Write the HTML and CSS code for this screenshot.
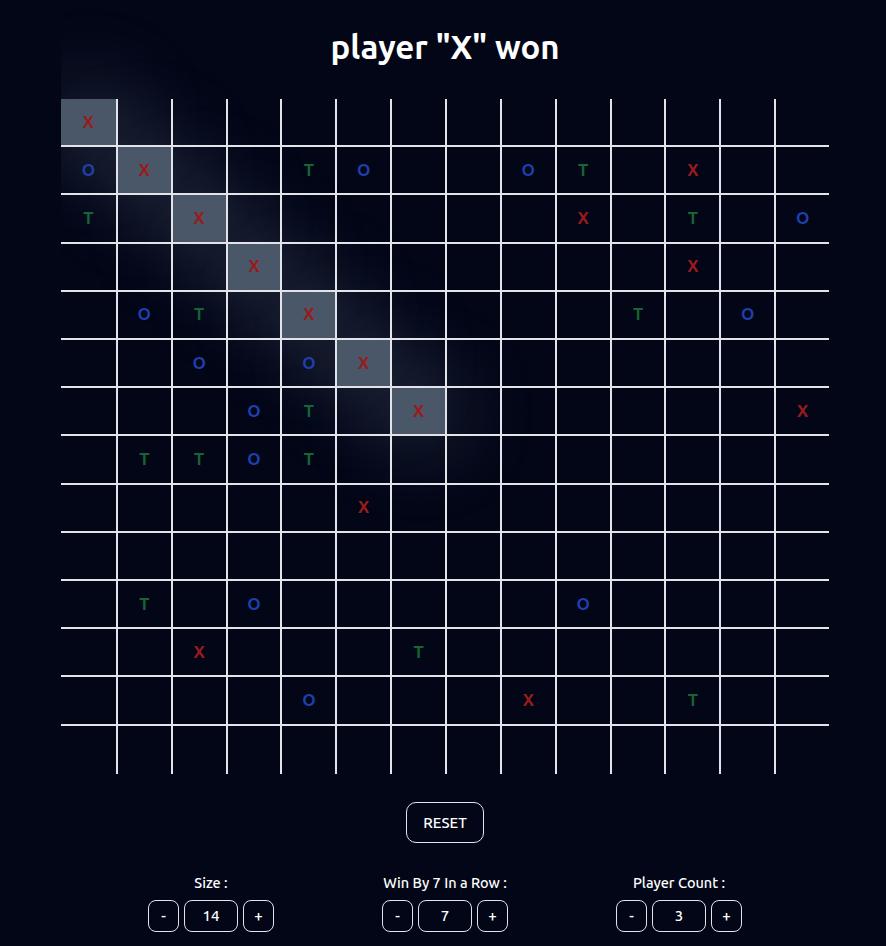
FILE: index.html
```html
<!DOCTYPE html>
<html lang="en">
<head>
<meta charset="utf-8">
<title>Tic Tac Toe</title>
<link rel="stylesheet" href="styles.css">
</head>
<body>
<main class="app">
  <h1 class="title">player "X" won</h1>
  <div class="board">
    <div class="cell win x">X</div><div class="cell"></div><div class="cell"></div><div class="cell"></div><div class="cell"></div><div class="cell"></div><div class="cell"></div><div class="cell"></div><div class="cell"></div><div class="cell"></div><div class="cell"></div><div class="cell"></div><div class="cell"></div><div class="cell"></div>
    <div class="cell o">O</div><div class="cell win x">X</div><div class="cell"></div><div class="cell"></div><div class="cell t">T</div><div class="cell o">O</div><div class="cell"></div><div class="cell"></div><div class="cell o">O</div><div class="cell t">T</div><div class="cell"></div><div class="cell x">X</div><div class="cell"></div><div class="cell"></div>
    <div class="cell t">T</div><div class="cell"></div><div class="cell win x">X</div><div class="cell"></div><div class="cell"></div><div class="cell"></div><div class="cell"></div><div class="cell"></div><div class="cell"></div><div class="cell x">X</div><div class="cell"></div><div class="cell t">T</div><div class="cell"></div><div class="cell o">O</div>
    <div class="cell"></div><div class="cell"></div><div class="cell"></div><div class="cell win x">X</div><div class="cell"></div><div class="cell"></div><div class="cell"></div><div class="cell"></div><div class="cell"></div><div class="cell"></div><div class="cell"></div><div class="cell x">X</div><div class="cell"></div><div class="cell"></div>
    <div class="cell"></div><div class="cell o">O</div><div class="cell t">T</div><div class="cell"></div><div class="cell win x">X</div><div class="cell"></div><div class="cell"></div><div class="cell"></div><div class="cell"></div><div class="cell"></div><div class="cell t">T</div><div class="cell"></div><div class="cell o">O</div><div class="cell"></div>
    <div class="cell"></div><div class="cell"></div><div class="cell o">O</div><div class="cell"></div><div class="cell o">O</div><div class="cell win x">X</div><div class="cell"></div><div class="cell"></div><div class="cell"></div><div class="cell"></div><div class="cell"></div><div class="cell"></div><div class="cell"></div><div class="cell"></div>
    <div class="cell"></div><div class="cell"></div><div class="cell"></div><div class="cell o">O</div><div class="cell t">T</div><div class="cell"></div><div class="cell win x">X</div><div class="cell"></div><div class="cell"></div><div class="cell"></div><div class="cell"></div><div class="cell"></div><div class="cell"></div><div class="cell x">X</div>
    <div class="cell"></div><div class="cell t">T</div><div class="cell t">T</div><div class="cell o">O</div><div class="cell t">T</div><div class="cell"></div><div class="cell"></div><div class="cell"></div><div class="cell"></div><div class="cell"></div><div class="cell"></div><div class="cell"></div><div class="cell"></div><div class="cell"></div>
    <div class="cell"></div><div class="cell"></div><div class="cell"></div><div class="cell"></div><div class="cell"></div><div class="cell x">X</div><div class="cell"></div><div class="cell"></div><div class="cell"></div><div class="cell"></div><div class="cell"></div><div class="cell"></div><div class="cell"></div><div class="cell"></div>
    <div class="cell"></div><div class="cell"></div><div class="cell"></div><div class="cell"></div><div class="cell"></div><div class="cell"></div><div class="cell"></div><div class="cell"></div><div class="cell"></div><div class="cell"></div><div class="cell"></div><div class="cell"></div><div class="cell"></div><div class="cell"></div>
    <div class="cell"></div><div class="cell t">T</div><div class="cell"></div><div class="cell o">O</div><div class="cell"></div><div class="cell"></div><div class="cell"></div><div class="cell"></div><div class="cell"></div><div class="cell o">O</div><div class="cell"></div><div class="cell"></div><div class="cell"></div><div class="cell"></div>
    <div class="cell"></div><div class="cell"></div><div class="cell x">X</div><div class="cell"></div><div class="cell"></div><div class="cell"></div><div class="cell t">T</div><div class="cell"></div><div class="cell"></div><div class="cell"></div><div class="cell"></div><div class="cell"></div><div class="cell"></div><div class="cell"></div>
    <div class="cell"></div><div class="cell"></div><div class="cell"></div><div class="cell"></div><div class="cell o">O</div><div class="cell"></div><div class="cell"></div><div class="cell"></div><div class="cell x">X</div><div class="cell"></div><div class="cell"></div><div class="cell t">T</div><div class="cell"></div><div class="cell"></div>
    <div class="cell"></div><div class="cell"></div><div class="cell"></div><div class="cell"></div><div class="cell"></div><div class="cell"></div><div class="cell"></div><div class="cell"></div><div class="cell"></div><div class="cell"></div><div class="cell"></div><div class="cell"></div><div class="cell"></div><div class="cell"></div>
  </div>
  <button class="reset" type="button">RESET</button>
  <div class="settings">
    <div class="setting">
      <div class="label">Size :</div>
      <div class="stepper"><button class="step" type="button">-</button><div class="value">14</div><button class="step" type="button">+</button></div>
    </div>
    <div class="setting">
      <div class="label">Win By 7 In a Row :</div>
      <div class="stepper"><button class="step" type="button">-</button><div class="value">7</div><button class="step" type="button">+</button></div>
    </div>
    <div class="setting">
      <div class="label">Player Count :</div>
      <div class="stepper"><button class="step" type="button">-</button><div class="value">3</div><button class="step" type="button">+</button></div>
    </div>
  </div>
</main>
</body>
</html>
```
FILE: styles.css
```css
html, body {
  margin: 0;
  padding: 0;
  background: #020617;
}

body {
  font-family: "Ubuntu", "Open Sans", "Noto Sans", sans-serif;
  color: #ffffff;
}

.app {
  width: 768px;
  margin-left: 61px;
  overflow: hidden;
  padding-bottom: 14px;
}

.title {
  margin: 0 0 32px;
  padding-top: 27px;
  font-size: 33px;
  line-height: 40px;
  font-weight: 700;
  text-align: center;
}

.board {
  position: relative;
  isolation: isolate;
  display: grid;
  grid-template-columns: repeat(14, 1fr);
  grid-template-rows: repeat(14, 48.21px);
}

.cell {
  box-sizing: border-box;
  border-left: 2px solid #e2e4ea;
  border-bottom: 2px solid #e2e4ea;
  display: flex;
  align-items: center;
  justify-content: center;
  font-size: 17px;
  font-weight: 700;
  padding-bottom: 2px;
}

.cell:nth-child(14n+1) {
  border-left: none;
}

.cell:nth-child(n+183) {
  border-bottom: none;
}

.x { color: #991b1b; }
.o { color: #1e40af; }
.t { color: #166534; }

.win {
  position: relative;
  background: #4a5768;
}

.win::before {
  content: "";
  position: absolute;
  inset: 0;
  z-index: -1;
  box-shadow: 0 0 80px 16px rgba(148, 163, 184, 0.2);
}

.reset {
  display: block;
  margin: 28px auto 0;
  width: 78px;
  height: 41px;
  box-sizing: border-box;
  background: transparent;
  border: 1px solid #e2e4ea;
  border-radius: 10px;
  color: #ffffff;
  font-family: inherit;
  font-size: 15px;
  font-weight: 500;
  padding: 0;
}

.settings {
  display: flex;
  justify-content: center;
  gap: 108px;
  margin-top: 30px;
}

.setting {
  width: 126px;
  display: flex;
  flex-direction: column;
  align-items: center;
}

.label {
  font-size: 14.5px;
  font-weight: 500;
  line-height: 20px;
  margin-bottom: 7px;
  white-space: nowrap;
}

.stepper {
  display: flex;
  gap: 5px;
}

.step,
.value {
  box-sizing: border-box;
  height: 32px;
  border: 1px solid #e2e4ea;
  border-radius: 8px;
  background: transparent;
  color: #ffffff;
  font-family: inherit;
  font-size: 15px;
  font-weight: 500;
  display: flex;
  align-items: center;
  justify-content: center;
  padding: 0;
}

.step {
  width: 31px;
}

.value {
  width: 54px;
}
```
